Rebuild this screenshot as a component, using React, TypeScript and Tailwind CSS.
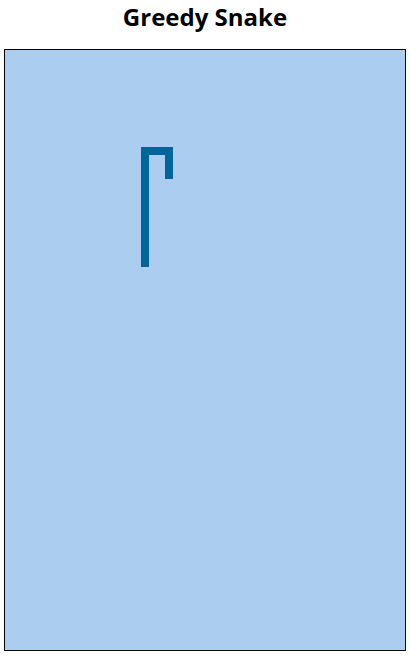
const segments = [
  { left: 136, top: 97, width: 8, height: 120 },
  { left: 136, top: 97, width: 32, height: 8 },
  { left: 160, top: 97, width: 8, height: 32 },
]

export default function App() {
  return (
    <div className="flex flex-col items-center bg-white font-['Open_Sans',sans-serif]">
      <h1 className="h-[49px] pt-[1px] text-[24px] leading-[31px] font-bold text-black">
        Greedy Snake
      </h1>
      <div className="relative h-[602px] w-[402px] border border-black bg-[#abcdef]">
        {segments.map((s, i) => (
          <div
            key={i}
            className="absolute bg-[#006699]"
            style={{ left: s.left, top: s.top, width: s.width, height: s.height }}
          />
        ))}
      </div>
    </div>
  )
}
